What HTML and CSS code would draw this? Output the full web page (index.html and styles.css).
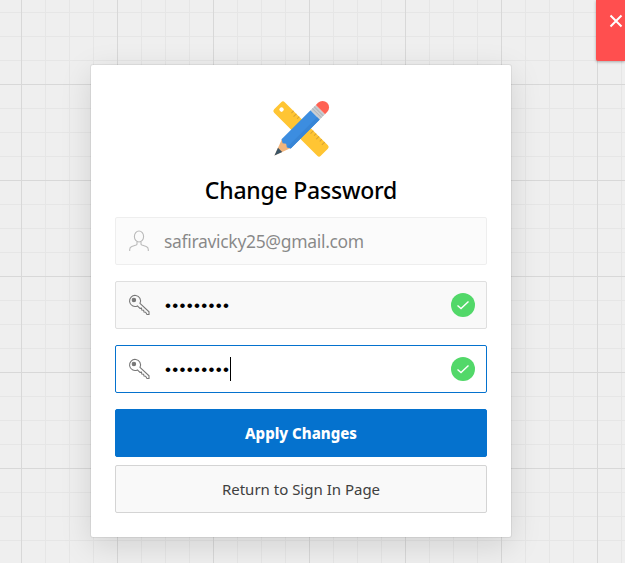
FILE: index.html
```html
<!DOCTYPE html>
<html lang="en">
<head>
<meta charset="utf-8">
<title>Change Password</title>
<link rel="stylesheet" href="styles.css">
</head>
<body>
<main class="card">
  <svg class="logo" viewBox="0 0 64 64" aria-hidden="true">
    <g transform="translate(32 32) rotate(45)">
      <rect x="-33" y="-7.500" width="66" height="15" rx="2.500" fill="#ffc533"/>
      <circle cx="-27.500" cy="0" r="2.200" fill="#fff"/>
      <path d="M-18-7.500v3M-14-7.500v4M-10-7.500v3M10-7.500v4M14-7.500v3M18-7.500v4M22-7.500v3M26-7.500v4" stroke="#d6a236" stroke-width="1"/>
    </g>
    <g transform="translate(32 32) rotate(-45)">
      <path d="M-37.500 0L-20-6.500V6.500Z" fill="#f2b57c"/>
      <path d="M-37.500 0L-29.500-3V3Z" fill="#3c5566"/>
      <path d="M-21-6.500H20V6.500H-21L-23 3L-21 0L-23-3Z" fill="#3c8de0"/>
      <path d="M-22 3H20V6.500H-21Z" fill="#3785d6"/>
      <rect x="20" y="-6.500" width="7.500" height="13" fill="#c9cdd1"/>
      <path d="M22.500-6.500V6.500M25-6.500V6.500" stroke="#b0b5ba"/>
      <path d="M27.500-6.500h3a6.500 6.500 0 0 1 0 13h-3Z" fill="#ff6253"/>
    </g>
  </svg>
  <h1 class="title"><span>Change Password</span></h1>
  <div class="field disabled">
    <svg class="icon" viewBox="0 0 24 24"><ellipse cx="12" cy="7.500" rx="4.600" ry="5.500"/><path d="M10 12.700v2.400c0 .5-.4.8-.9 1L4.800 17.600Q2.700 18.500 2.700 20.500V22M14 12.700v2.400c0 .5.4.8.9 1L19.200 17.600Q21.300 18.500 21.300 20.500V22"/></svg>
    <span class="email">safiravicky25@gmail.com</span>
  </div>
  <div class="field">
    <svg class="icon" viewBox="0 0 24 24"><path d="M13 10.300A5.500 5.500 0 1 0 10.400 12.900L13 15.400L14.500 15.200L14.800 17L16.600 17.200L17 19L18.600 19.200L20 21.500H22V18.800Z"/><circle class="hole" cx="6.900" cy="6.900" r="1.700"/></svg>
    <span class="dots">•••••••••</span>
    <svg class="check" viewBox="0 0 24 24"><circle cx="12" cy="12" r="12"/><path d="M6.500 12.500l3.500 3L17.500 8.500"/></svg>
  </div>
  <div class="field focused">
    <svg class="icon" viewBox="0 0 24 24"><path d="M13 10.300A5.500 5.500 0 1 0 10.400 12.900L13 15.400L14.500 15.200L14.800 17L16.600 17.200L17 19L18.600 19.200L20 21.500H22V18.800Z"/><circle class="hole" cx="6.900" cy="6.900" r="1.700"/></svg>
    <span class="dots">•••••••••</span><span class="caret"></span>
    <svg class="check" viewBox="0 0 24 24"><circle cx="12" cy="12" r="12"/><path d="M6.500 12.500l3.500 3L17.500 8.500"/></svg>
  </div>
  <button class="button primary" type="button"><span>Apply Changes</span></button>
  <button class="button" type="button"><span>Return to Sign In Page</span></button>
</main>
<button class="close" type="button" aria-label="Close"><svg viewBox="0 0 14 14"><path d="M1.500 1.500l11 11M12.500 1.500l-11 11"/></svg></button>
</body>
</html>
```
FILE: styles.css
```css
* { box-sizing: border-box; }
body {
  margin: 0;
  height: 563px;
  overflow: hidden;
  padding: 65px 0 0 91px;
  font-family: "Noto Sans", "Open Sans", sans-serif;
  background-color: #efefef;
  background-image:
    linear-gradient(90deg, #d8d8d8 1px, transparent 1px),
    linear-gradient(#d8d8d8 1px, transparent 1px),
    linear-gradient(90deg, #e6e6e6 1px, transparent 1px),
    linear-gradient(#e6e6e6 1px, transparent 1px);
  background-size: 96px 96px, 96px 96px, 24px 24px, 24px 24px;
  background-position: 21px 0, 0 84px, 21px 0, 0 12px;
}
.card {
  width: 420px;
  height: 472px;
  padding: 32px 24px 24px;
  display: flex;
  flex-direction: column;
  background: #fff;
  border-radius: 2px;
  box-shadow: 0 0 0 1px rgba(0,0,0,.06), 0 8px 32px rgba(0,0,0,.13);
}
.logo { width: 64px; height: 64px; align-self: center; flex: none; }
.title {
  margin: 13px 0 10px;
  height: 33px;
  line-height: 33px;
  text-align: center;
  font-size: 23px;
  font-weight: 500;
  letter-spacing: -.23px;
  color: #000;
  white-space: nowrap;
}
.field {
  height: 48px;
  flex: none;
  margin-bottom: 16px;
  padding: 0 11px;
  display: flex;
  align-items: center;
  border: 1px solid #dfdfdf;
  border-radius: 2px;
  background: #f9f9f9;
}
.field.disabled { opacity: .5; }
.field.focused { background: #fff; border-color: #0572ce; }
.icon { width: 24px; height: 24px; margin-right: 13px; flex: none; fill: none; stroke: #777; stroke-width: 1.1; }
.hole { fill: #777; }
.email { font-size: 17.5px; font-weight: 400; letter-spacing: -.32px; color: #111; }
.dots { margin-left: 1px; padding-top: 2px; font-family: "Liberation Sans", sans-serif; font-size: 17px; letter-spacing: 1.3px; color: #000; }
.caret { width: 1px; height: 24px; background: #000; }
.check { width: 24px; height: 24px; margin-left: auto; fill: #52d869; }
.check path { fill: none; stroke: #fff; stroke-width: 1.4; }
.button {
  height: 48px;
  flex: none;
  margin: 0 0 8px;
  padding: 0;
  border: 1px solid #d4d4d4;
  border-radius: 2px;
  background: #f9f9f9;
  color: #404040;
  font-family: inherit;
  font-size: 15px;
  line-height: 22px;
}
.button.primary { border-color: #0572ce; background: #0572ce; color: #fff; font-weight: 800; letter-spacing: 0; }
.close {
  position: absolute;
  top: 0;
  right: 0;
  width: 29px;
  height: 61px;
  padding: 14px 0 0 13px;
  display: flex;
  align-items: flex-start;
  border: 0;
  border-radius: 0 0 0 2px;
  background: #ff4f4f;
  box-shadow: 0 1px 3px rgba(0,0,0,.3);
}
.close svg { display: block; flex: none; width: 14px; height: 14px; fill: none; stroke: #fff; stroke-width: 2; }
```
